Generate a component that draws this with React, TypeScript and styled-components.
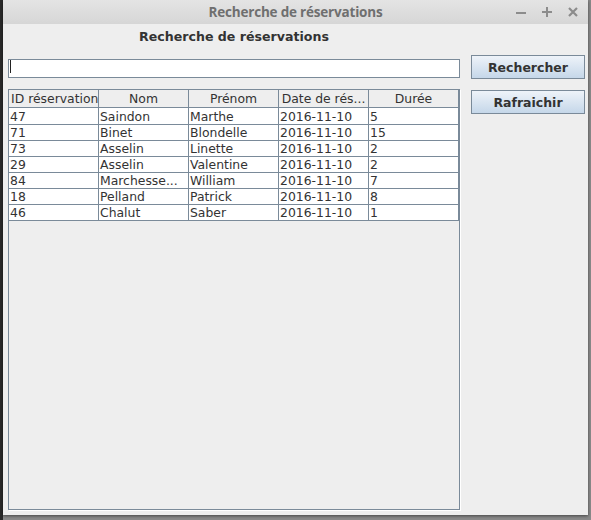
import React from "react";
import styled, { createGlobalStyle } from "styled-components";

const Global = createGlobalStyle`
  html, body { margin: 0; padding: 0; }
  body {
    background: #5a5a5a;
    width: 591px;
    height: 520px;
    overflow: hidden;
    font-family: "DejaVu Sans", "Liberation Sans", sans-serif;
  }
`;

const Desktop = styled.div`
  width: 591px;
  height: 520px;
  display: flex;
  background: linear-gradient(90deg, #2a2a2a 0px, #2a2a2a 3px, #8a8a8a 3px, #8a8a8a 100%);
`;

const Window = styled.div`
  margin-left: 3px;
  width: 585px;
  height: 515px;
  background: #eeeeee;
  display: flex;
  flex-direction: column;
  box-shadow: 0 1px 3px rgba(0, 0, 0, 0.5);
`;

const TitleBar = styled.div`
  height: 24px;
  flex: none;
  position: relative;
  display: flex;
  align-items: center;
  justify-content: center;
  background: linear-gradient(#e4e4e4, #d6d6d6);
`;

const Title = styled.span`
  font-family: "Open Sans", "DejaVu Sans", sans-serif;
  font-weight: 700;
  font-size: 13.5px;
  color: #6f6f6f;
  letter-spacing: -0.2px;
`;

const Controls = styled.div`
  position: absolute;
  right: 8px;
  top: 0;
  height: 24px;
  display: flex;
  align-items: center;
  gap: 12px;
`;

const Ctrl = styled.span`
  width: 14px;
  height: 14px;
  display: flex;
  align-items: center;
  justify-content: center;
`;

const Body = styled.div`
  flex: 1;
  display: flex;
  padding: 0 3px 5px 5px;
  gap: 11px;
  min-height: 0;
`;

const LeftCol = styled.div`
  width: 452px;
  display: flex;
  flex-direction: column;
`;

const Heading = styled.div`
  height: 33px;
  box-sizing: border-box;
  padding-top: 5px;
  text-align: center;
  font-weight: 700;
  font-size: 12.6px;
  line-height: 16px;
  color: #333333;
`;

const FieldBox = styled.div`
  position: relative;
  width: 452px;
  height: 19px;
`;

const Field = styled.input`
  box-sizing: border-box;
  width: 452px;
  height: 19px;
  margin: 0;
  border: 1px solid #7a8a99;
  background: #ffffff;
  padding: 0 2px;
  font-family: inherit;
  font-size: 12px;
  outline: none;
  caret-color: transparent;
`;

const Caret = styled.span`
  position: absolute;
  left: 2px;
  top: 3px;
  width: 1px;
  height: 13px;
  background: #222222;
  pointer-events: none;
`;

const Scroll = styled.div`
  margin-top: 13px;
  flex: 1;
  box-sizing: border-box;
  border: 1px solid #7a8a99;
  box-shadow: 1px 1px 0 #ffffff;
  background: #eeeeee;
`;

const Grid = styled.div`
  display: grid;
  grid-template-columns: repeat(5, 90px);
`;

const HeadCell = styled.div`
  box-sizing: border-box;
  height: 18px;
  border-right: 1px solid #7a8a99;
  border-bottom: 1px solid #7a8a99;
  background: #eeeeee;
  font-size: 12.4px;
  line-height: 16px;
  padding: 1px 2px 0;
  color: #333333;
  text-align: center;
  white-space: nowrap;
  overflow: hidden;
`;

const Cell = styled.div<{ $first?: boolean }>`
  box-sizing: border-box;
  height: ${(p) => (p.$first ? 17 : 16)}px;
  padding-top: ${(p) => (p.$first ? 2 : 1)}px;
  border-right: 1px solid #7a8a99;
  border-bottom: 1px solid #7a8a99;
  background: #ffffff;
  font-size: 12.4px;
  line-height: 14px;
  color: #333333;
  white-space: nowrap;
  overflow: hidden;
  padding-left: 1px;
`;

const RightCol = styled.div`
  display: flex;
  flex-direction: column;
  gap: 11px;
  padding-top: 31px;
`;

const Button = styled.button`
  box-sizing: border-box;
  width: 114px;
  height: 24px;
  margin: 0;
  border: 1px solid #7a8a99;
  border-radius: 0;
  background: linear-gradient(#eef3f9, #c5d7e9);
  font-family: inherit;
  font-weight: 700;
  font-size: 12.5px;
  color: #333333;
  padding: 0;
  cursor: pointer;
`;

const headers = ["ID réservation", "Nom", "Prénom", "Date de rés...", "Durée"];
const rows = [
  ["47", "Saindon", "Marthe", "2016-11-10", "5"],
  ["71", "Binet", "Blondelle", "2016-11-10", "15"],
  ["73", "Asselin", "Linette", "2016-11-10", "2"],
  ["29", "Asselin", "Valentine", "2016-11-10", "2"],
  ["84", "Marchesse...", "William", "2016-11-10", "7"],
  ["18", "Pelland", "Patrick", "2016-11-10", "8"],
  ["46", "Chalut", "Saber", "2016-11-10", "1"],
];

export default function App() {
  return (
    <>
      <Global />
      <Desktop>
        <Window>
          <TitleBar>
            <Title>Recherche de réservations</Title>
            <Controls>
              <Ctrl>
                <svg width="10" height="10" viewBox="0 0 10 10">
                  <rect x="0" y="5" width="10" height="2" fill="#8c8c8c" />
                </svg>
              </Ctrl>
              <Ctrl>
                <svg width="10" height="10" viewBox="0 0 10 10">
                  <rect x="0" y="4" width="10" height="2" fill="#8c8c8c" />
                  <rect x="4" y="0" width="2" height="10" fill="#8c8c8c" />
                </svg>
              </Ctrl>
              <Ctrl>
                <svg width="10" height="10" viewBox="0 0 10 10">
                  <path d="M1 1 L9 9 M9 1 L1 9" stroke="#8c8c8c" strokeWidth="2.2" />
                </svg>
              </Ctrl>
            </Controls>
          </TitleBar>
          <Body>
            <LeftCol>
              <Heading>Recherche de réservations</Heading>
              <FieldBox>
                <Field defaultValue="" />
                <Caret />
              </FieldBox>
              <Scroll>
                <Grid>
                  {headers.map((h) => (
                    <HeadCell key={h}>{h}</HeadCell>
                  ))}
                  {rows.map((r, i) =>
                    r.map((c, j) => (
                      <Cell key={`${i}-${j}`} $first={i === 0}>
                        {c}
                      </Cell>
                    ))
                  )}
                </Grid>
              </Scroll>
            </LeftCol>
            <RightCol>
              <Button>Rechercher</Button>
              <Button>Rafraichir</Button>
            </RightCol>
          </Body>
        </Window>
      </Desktop>
    </>
  );
}
